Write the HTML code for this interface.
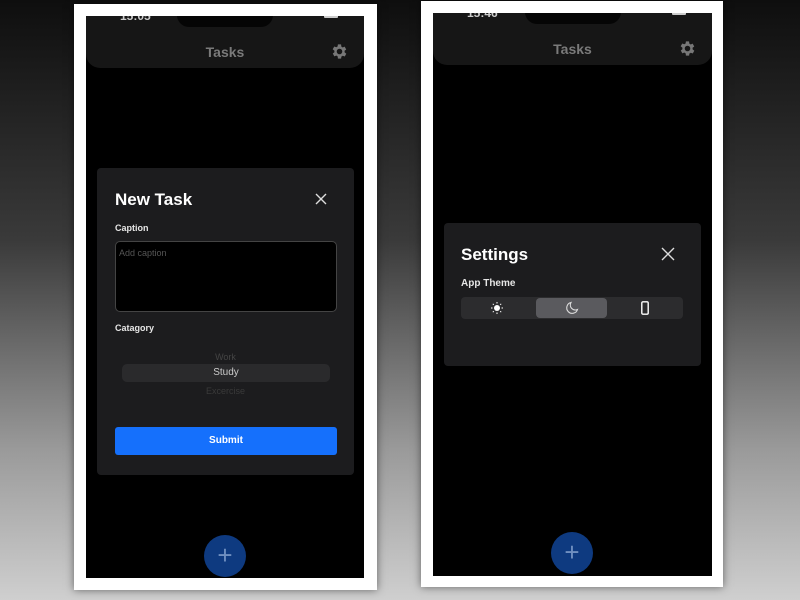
<!DOCTYPE html><html><head><style>
*{margin:0;padding:0;box-sizing:border-box}
body{width:800px;height:600px;overflow:hidden;background:linear-gradient(#0e0e0e 0%,#3a3a3a 40%,#9a9a9a 75%,#cfcfcf 100%);font-family:"Liberation Sans",sans-serif;position:relative}
.frame{position:absolute;background:#fff;box-shadow:0 0 8px rgba(0,0,0,.5)}
.scr{position:absolute;background:#000;overflow:hidden}
.hdr{position:absolute;left:0;right:0;top:0;height:52px;background:#161616;border-radius:0 0 14px 14px}
.notch{position:absolute;left:50%;margin-left:-48px;top:-14px;width:96px;height:25px;background:#050505;border-radius:12px}
.tm{position:absolute;left:34px;top:-7px;color:#ccc;font-size:12px;font-weight:bold}
.bat{position:absolute;right:26px;top:-4px;width:14px;height:6px;background:#ccc;border-radius:1px}
.ttl{position:absolute;left:0;right:0;top:28px;text-align:center;color:#7a7a7a;font-weight:bold;font-size:14px}
.gear{position:absolute;right:15px;top:26px}
.dlg{position:absolute;background:#1c1c1e;border-radius:4px}
.h{position:absolute;color:#fff;font-weight:bold;font-size:17px}
.lbl{position:absolute;color:#e6e6e6;font-weight:bold;font-size:10px}
.fab{position:absolute;width:42px;height:42px;border-radius:50%;background:#0e3a80;color:#6f8fc0;font-size:26px;line-height:40px;text-align:center}
</style></head><body>
<div class="frame" style="left:74px;top:4px;width:303px;height:586px"></div>
<div class="scr" style="left:86px;top:16px;width:278px;height:562px">
 <div class="hdr"><div class="notch"></div><div class="tm">15:05</div><div class="bat"></div><div class="ttl">Tasks</div>
 <svg class="gear" width="19" height="19" viewBox="0 0 24 24"><path fill="#777" d="M19.4 13a7.5 7.5 0 0 0 0-2l2.1-1.6-2-3.5-2.5 1a7 7 0 0 0-1.7-1L15 3h-4l-.4 2.7a7 7 0 0 0-1.7 1l-2.5-1-2 3.5L6.6 11a7.5 7.5 0 0 0 0 2l-2.1 1.6 2 3.5 2.5-1a7 7 0 0 0 1.7 1L11 21h4l.4-2.7a7 7 0 0 0 1.7-1l2.5 1 2-3.5zM13 15.5a3.5 3.5 0 1 1 0-7 3.5 3.5 0 0 1 0 7z" transform="translate(-1 0)"/></svg></div>
 <div class="dlg" style="left:11px;top:152px;width:257px;height:307px">
  <div class="h" style="left:18px;top:22px">New Task</div>
  <svg style="position:absolute;left:218px;top:25px" width="12" height="12"><path d="M1 1L11 11M11 1L1 11" stroke="#ddd" stroke-width="1.4"/></svg>
  <div class="lbl" style="left:18px;top:55px;font-size:9px">Caption</div>
  <div style="position:absolute;left:18px;top:73px;width:222px;height:71px;background:#000;border:1px solid #444;border-radius:5px;color:#555;font-size:9px;padding:6px 3px">Add caption</div>
  <div class="lbl" style="left:18px;top:155px;font-size:9px">Catagory</div>
  <div style="position:absolute;left:0;width:257px;top:184px;text-align:center;color:#444;font-size:9px">Work</div>
  <div style="position:absolute;left:25px;top:196px;width:208px;height:18px;background:#2a2a2c;border-radius:5px;text-align:center;color:#ccc;font-size:10px;line-height:18px">Study</div>
  <div style="position:absolute;left:0;width:257px;top:218px;text-align:center;color:#3a3a3a;font-size:9px">Excercise</div>
  <div style="position:absolute;left:18px;top:259px;width:222px;height:28px;background:#1570fc;border-radius:3px;color:#fff;font-weight:bold;font-size:10px;line-height:28px;text-align:center">Submit</div>
 </div>
 <div class="fab" style="left:118px;top:519px">+</div>
</div>
<div class="frame" style="left:421px;top:1px;width:302px;height:586px"></div>
<div class="scr" style="left:433px;top:13px;width:279px;height:563px">
 <div class="hdr"><div class="notch"></div><div class="tm">15:46</div><div class="bat"></div><div class="ttl">Tasks</div>
 <svg class="gear" width="19" height="19" viewBox="0 0 24 24"><path fill="#777" d="M19.4 13a7.5 7.5 0 0 0 0-2l2.1-1.6-2-3.5-2.5 1a7 7 0 0 0-1.7-1L15 3h-4l-.4 2.7a7 7 0 0 0-1.7 1l-2.5-1-2 3.5L6.6 11a7.5 7.5 0 0 0 0 2l-2.1 1.6 2 3.5 2.5-1a7 7 0 0 0 1.7 1L11 21h4l.4-2.7a7 7 0 0 0 1.7-1l2.5 1 2-3.5zM13 15.5a3.5 3.5 0 1 1 0-7 3.5 3.5 0 0 1 0 7z" transform="translate(-1 0)"/></svg></div>
 <div class="dlg" style="left:11px;top:210px;width:257px;height:143px">
  <div class="h" style="left:17px;top:22px">Settings</div>
  <svg style="position:absolute;left:217px;top:24px" width="14" height="14"><path d="M1 1L13 13M13 1L1 13" stroke="#ddd" stroke-width="1.4"/></svg>
  <div class="lbl" style="left:17px;top:55px">App Theme</div>
  <div style="position:absolute;left:17px;top:74px;width:222px;height:22px;background:#2c2c2e;border-radius:4px">
   <div style="position:absolute;left:75px;top:1px;width:71px;height:20px;background:#5a5a5e;border-radius:4px"></div>
   <svg style="position:absolute;left:30px;top:5px" width="12" height="12" viewBox="0 0 12 12"><circle cx="6" cy="6" r="3" fill="#fff"/><g stroke="#fff" stroke-width="1"><path d="M6 0v1.5M6 10.5V12M0 6h1.5M10.5 6H12M1.8 1.8l1 1M9.2 9.2l1 1M1.8 10.2l1-1M9.2 2.8l1-1"/></g></svg>
   <svg style="position:absolute;left:104px;top:4px" width="14" height="14" viewBox="0 0 14 14"><path d="M6 1.5a5.5 5.5 0 1 0 6.5 7A5 5 0 0 1 6 1.5z" fill="none" stroke="#ddd" stroke-width="1.1"/></svg>
   <svg style="position:absolute;left:180px;top:4px" width="8" height="14" viewBox="0 0 8 14"><rect x="0.8" y="0.8" width="6.4" height="12.4" rx="1.2" fill="none" stroke="#fff" stroke-width="1.4"/></svg>
  </div>
 </div>
 <div class="fab" style="left:118px;top:519px">+</div>
</div>
</body></html>
